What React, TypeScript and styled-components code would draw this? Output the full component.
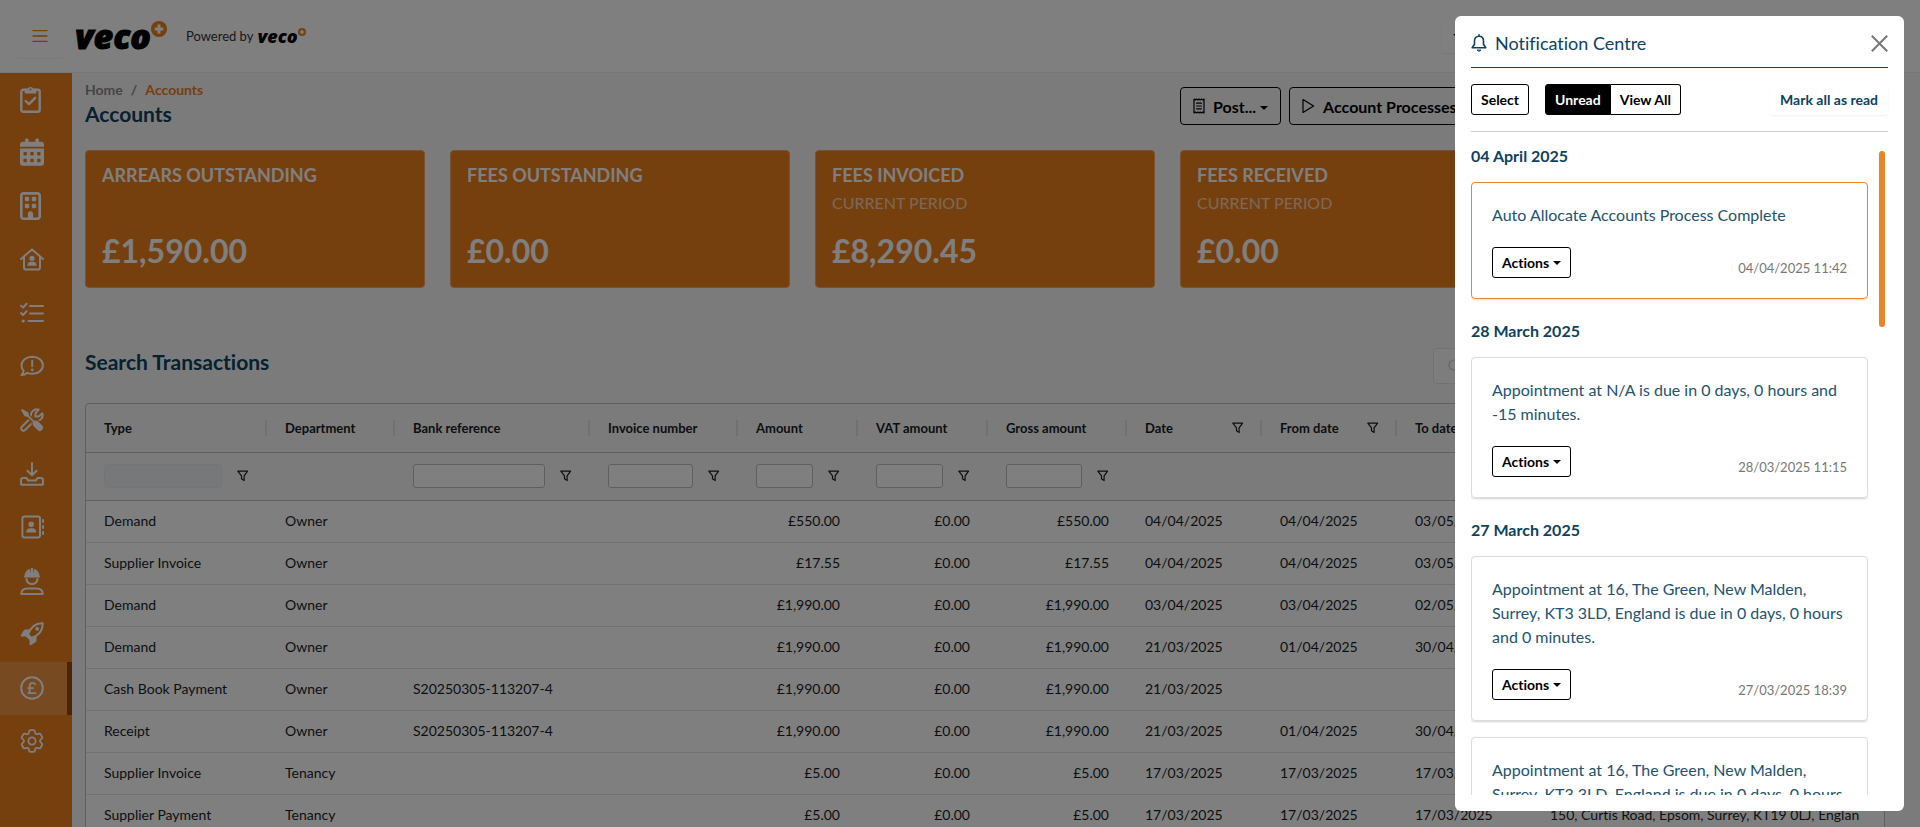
import React from 'react';
import styled, { createGlobalStyle, css } from 'styled-components';
import { FaRegBuilding, FaCalendarDays } from 'react-icons/fa6';
import { HiOutlineCog6Tooth } from 'react-icons/hi2';

const orange = '#ec7e1c';
const navy = '#0d4261';
const line = '#babfc7';
const softLine = '#dde2eb';

const GlobalStyle = createGlobalStyle`
  *, *::before, *::after { box-sizing: border-box; }
  body { margin: 0; font-family: Lato, "Open Sans", sans-serif; font-size: 14px; font-variant-ligatures: none; color: #181d1f; background: #f7f7f7; }
  button, input { font: inherit; font-variant-ligatures: none; color: inherit; }
  button { cursor: pointer; }
  h1, h2, h3, p, ul, ol { margin: 0; padding: 0; }
  ul, ol { list-style: none; }
  a { color: inherit; text-decoration: none; }
`;

/* ---------- page shell ---------- */

const Shell = styled.div`
  display: flex;
  flex-direction: column;
  height: 100vh;
  overflow: hidden;
`;

const TopBar = styled.header`
  display: flex;
  align-items: center;
  flex: none;
  height: 73px;
  padding: 0 16px;
  background: #fff;
  border-bottom: 1px solid #ececec;
`;

const MenuButton = styled.button`
  display: grid;
  place-items: center;
  width: 48px;
  height: 44px;
  padding: 0;
  border: 0;
  border-radius: 4px;
  background: none;
  color: ${orange};
  box-shadow: 0 1px 1px rgba(0, 0, 0, 0.06);
`;

const Logo = styled.span<{ $small?: boolean }>`
  display: inline-flex;
  align-items: flex-start;
  color: #000;
  font-family: 'Open Sans', sans-serif;
  font-style: italic;
  font-weight: 800;
  font-size: ${(p) => (p.$small ? 18 : 34)}px;
  line-height: ${(p) => (p.$small ? 24 : 44)}px;
  -webkit-text-stroke: ${(p) => (p.$small ? 0 : 1)}px #000;
  svg {
    flex: none;
    width: ${(p) => (p.$small ? 8 : 16)}px;
    height: ${(p) => (p.$small ? 8 : 16)}px;
    margin-top: ${(p) => (p.$small ? 4 : 7)}px;
  }
`;

const HomeLink = styled.a`
  display: flex;
  margin-left: 11px;
`;

const PoweredBy = styled.p`
  display: flex;
  align-items: center;
  gap: 4px;
  margin-left: 19px;
  font-size: 13px;
  line-height: 24px;
  color: #333;
`;

const TopTools = styled.div`
  width: 463px;
  margin-left: auto;
`;

const AccountButton = styled.button`
  display: flex;
  align-items: center;
  width: 96px;
  height: 34px;
  padding: 0 8px;
  border: 0;
  border-radius: 4px;
  background: none;
  box-shadow: 0 1px 2px rgba(0, 0, 0, 0.08);
`;

const Body = styled.div`
  display: flex;
  flex: 1;
  min-height: 0;
`;

const SideBar = styled.nav`
  flex: none;
  width: 72px;
  background: ${orange};
`;

const SideList = styled.ul`
  display: grid;
  grid-template-rows: repeat(13, 1fr);
  height: 696px;
`;

const SideLink = styled.a<{ $active?: boolean }>`
  display: flex;
  align-items: center;
  height: 100%;
  padding: 0 20px 2px;
  color: #fff;
  ${(p) =>
    p.$active &&
    css`
      background: rgba(255, 255, 255, 0.18);
      border-right: 5px solid #96490b;
    `}
  svg {
    display: block;
    width: 24px;
    height: 24px;
  }
  svg.tall {
    height: 28px;
  }
  svg.narrow {
    width: 21px;
    height: 28px;
  }
`;

const Main = styled.main`
  flex: 1;
  min-width: 0;
  padding: 7px 35px 0 13px;
`;

const columns = css`
  display: grid;
  grid-template-columns: repeat(5, minmax(0, 1fr));
  column-gap: 25px;
`;

const PageHead = styled.div`
  ${columns}
  min-height: 48px;
  margin-bottom: 22px;
`;

const PageTitle = styled.div`
  grid-column: span 3;
`;

const Crumbs = styled.ol`
  display: flex;
  gap: 8px;
  font-size: 14px;
  font-weight: 700;
  line-height: 20px;
  color: #8b8b8b;
  li {
    display: flex;
    gap: 8px;
  }
  [aria-current] {
    color: ${orange};
  }
`;

const Heading = styled.h1`
  font-size: 21px;
  font-weight: 700;
  line-height: 28px;
  color: ${navy};
`;

const PageActions = styled.div`
  display: flex;
  align-items: flex-start;
  gap: 8px;
  grid-column: span 2;
  padding-top: 7px;
`;

const OutlineButton = styled.button`
  display: flex;
  align-items: center;
  gap: 8px;
  height: 38px;
  padding: 0 12px;
  border: 1px solid #000;
  border-radius: 4px;
  background: none;
  color: #000;
  font-size: 16px;
  font-weight: 700;
  white-space: nowrap;
`;

const Caret = styled.span`
  display: inline-block;
  margin-left: 4px;
  vertical-align: 3px;
  border: 4px solid transparent;
  border-top-color: currentColor;
  border-bottom: 0;
`;

const Cards = styled.section`
  ${columns}
`;

const StatCard = styled.article`
  display: flex;
  flex-direction: column;
  height: 138px;
  padding: 12px 16px 16px;
  border: 1px solid #f0a566;
  border-radius: 4px;
  background: ${orange};
  color: #fff;
`;

const StatName = styled.h2`
  font-size: 18px;
  font-weight: 700;
  line-height: 24px;
`;

const StatPeriod = styled.p`
  padding-top: 4px;
  font-size: 16px;
  line-height: 24px;
  opacity: 0.65;
`;

const StatValue = styled.p`
  margin-top: auto;
  font-size: 32px;
  font-weight: 700;
  line-height: 40px;
`;

const SearchHead = styled.div`
  display: flex;
  justify-content: space-between;
  align-items: flex-start;
  margin: 60px 0 19px;
`;

const SearchBox = styled.label`
  display: flex;
  align-items: center;
  gap: 8px;
  width: 452px;
  height: 36px;
  padding: 0 14px;
  border: 1px solid #e2e2e2;
  border-radius: 4px;
  background: #fbfbfb;
  color: #ccc;
  input {
    flex: 1;
    min-width: 0;
    border: 0;
    background: none;
  }
`;

/* ---------- transactions table ---------- */

const TableFrame = styled.div`
  border: 1px solid ${line};
  border-radius: 4px;
  overflow: hidden;
`;

const Table = styled.table`
  width: 100%;
  table-layout: fixed;
  border-collapse: collapse;
  font-size: 14px;
  line-height: 20px;
`;

const HeadCell = styled.th`
  position: relative;
  height: 48px;
  padding: 0 18px;
  border-bottom: 1px solid ${line};
  font-size: 13px;
  font-weight: 700;
  text-align: left;
  white-space: nowrap;
  &:not(:last-child)::after {
    content: '';
    position: absolute;
    right: 0;
    top: 16px;
    width: 2px;
    height: 16px;
    background: ${softLine};
  }
`;

const HeadLabel = styled.div`
  display: flex;
  align-items: center;
  justify-content: space-between;
`;

const FilterCell = styled.td`
  height: 48px;
  padding: 0 18px;
  border-bottom: 1px solid ${line};
`;

const FilterField = styled.div`
  display: flex;
  align-items: center;
  gap: 15px;
  input {
    flex: 1;
    min-width: 0;
    height: 24px;
    border: 1px solid ${line};
    border-radius: 3px;
    background: #fff;
  }
  input:disabled {
    border-color: #e9ebee;
    background: #eff0f2;
  }
`;

const IconButton = styled.button`
  display: block;
  padding: 0;
  border: 0;
  background: none;
  svg {
    display: block;
  }
`;

const Cell = styled.td<{ $right?: boolean }>`
  height: 42px;
  padding: 0 18px;
  border-bottom: 1px solid ${softLine};
  background: #fff;
  text-align: ${(p) => (p.$right ? 'right' : 'left')};
  white-space: nowrap;
  overflow: hidden;
`;

/* ---------- notification panel ---------- */

const Backdrop = styled.div`
  position: fixed;
  inset: 0;
  background: rgba(0, 0, 0, 0.5);
`;

const Panel = styled.aside`
  position: fixed;
  top: 16px;
  right: 16px;
  bottom: 16px;
  display: flex;
  flex-direction: column;
  width: 449px;
  padding: 0 16px 16px;
  border-radius: 6px;
  background: #fff;
  color: ${navy};
`;

const PanelHead = styled.div`
  display: flex;
  align-items: center;
  gap: 8px;
  padding: 15px 0 12px;
  border-bottom: 1px solid ${navy};
`;

const PanelTitle = styled.h2`
  flex: 1;
  font-size: 18px;
  font-weight: 400;
  line-height: 24px;
`;

const PanelBar = styled.div`
  display: flex;
  align-items: center;
  gap: 16px;
  padding: 16px 0;
  border-bottom: 1px solid #ccc;
`;

const SmallButton = styled.button<{ $on?: boolean; $plain?: boolean }>`
  height: 31px;
  padding: 0 9px;
  border: 1px solid #000;
  border-radius: 3px;
  background: ${(p) => (p.$on ? '#000' : '#fff')};
  color: ${(p) => (p.$on ? '#fff' : '#000')};
  font-size: 14px;
  font-weight: 700;
  line-height: 20px;
  white-space: nowrap;
  ${(p) =>
    p.$plain &&
    css`
      margin-left: auto;
      border-color: transparent;
      color: ${navy};
      box-shadow: 0 1px 2px rgba(0, 0, 0, 0.06);
    `}
`;

const Segments = styled.div`
  display: flex;
  ${SmallButton}:first-child {
    border-radius: 3px 0 0 3px;
  }
  ${SmallButton}:last-child {
    border-left: 0;
    border-radius: 0 3px 3px 0;
  }
`;

const Feed = styled.div`
  display: flex;
  flex: 1;
  min-height: 0;
`;

const FeedList = styled.div`
  flex: 1;
  min-width: 0;
  padding-top: 8px;
  overflow-y: auto;
  scrollbar-width: none;
`;

const ScrollTrack = styled.div`
  width: 20px;
  padding: 19px 3px 0 11px;
`;

const ScrollThumb = styled.div`
  width: 6px;
  height: 176px;
  border-radius: 3px;
  background: #e6852d;
`;

const DayHeading = styled.h3`
  margin-bottom: 10px;
  font-size: 16px;
  font-weight: 700;
  line-height: 32px;
`;

const Note = styled.article<{ $current?: boolean }>`
  margin-bottom: 16px;
  padding: 20px;
  border: 1px solid ${(p) => (p.$current ? '#e6852d' : '#dcdcdc')};
  border-radius: 4px;
  box-shadow: 0 1px 2px ${(p) => (p.$current ? 'rgba(236, 126, 28, 0.25)' : 'rgba(0, 0, 0, 0.18)')};
  font-size: 16px;
  line-height: 24px;
  p {
    color: #23536f;
  }
`;

const NoteFoot = styled.div`
  display: flex;
  align-items: flex-end;
  justify-content: space-between;
  margin-top: 20px;
  time {
    font-size: 13px;
    line-height: 20px;
    color: #777;
  }
`;

/* ---------- drawings ---------- */

const stroke = {
  fill: 'none',
  stroke: 'currentColor',
  strokeWidth: 2,
  strokeLinecap: 'round' as const,
  strokeLinejoin: 'round' as const,
};

const MenuIcon = () => (
  <svg width="16" height="14" viewBox="0 0 16 14" {...stroke} strokeWidth={1.3}>
    <path d="M1 1.6h14M1 7h14M1 12.4h14" />
  </svg>
);

const PlusBadge = () => (
  <svg viewBox="0 0 16 16" aria-hidden="true">
    <circle cx="8" cy="8" r="8" fill={orange} />
    <path d="M8 3.6v8.8M3.6 8h8.8" stroke="#fff" strokeWidth="3" />
  </svg>
);

const FilterIcon = () => (
  <svg width="12" height="12" viewBox="0 0 12 12" fill="none" stroke="currentColor" strokeWidth="1.2" strokeLinejoin="round">
    <path d="M.8 1.100h9.800L7.100 5.800v4.800L4.500 8.800v-3z" />
  </svg>
);

const ReceiptIcon = () => (
  <svg width="12" height="16" viewBox="0 0 12 16" {...stroke} strokeWidth={1.2}>
    <path d="M1 1l1.300 1 1.200-1 1.300 1L6 1l1.200 1 1.300-1 1.200 1L11 1v14l-1.300-1-1.200 1-1.300-1L6 15l-1.200-1-1.300 1-1.200-1L1 15z" />
    <path d="M3.600 5.200h4.800M3.600 8h4.800M3.600 10.800h4.800" />
  </svg>
);

const PlayIcon = () => (
  <svg width="13" height="16" viewBox="0 0 13 16" {...stroke} strokeWidth={1.2}>
    <path d="M1 1.600v12.800L11.600 8z" />
  </svg>
);

const BellIcon = () => (
  <svg width="16" height="18" viewBox="0 0 16 18" {...stroke} strokeWidth={1.600}>
    <path d="M8 2.200c-2.800 0-4.500 2-4.500 4.700v3.300L1.200 13.800h13.600l-2.300-3.600V6.900C12.500 4.200 10.800 2.200 8 2.200zM8 .9v1.200" />
    <path d="M6.300 16.400c.8 1 2.600 1 3.400 0z" fill="currentColor" strokeWidth={1} />
  </svg>
);

const SearchIcon = () => (
  <svg width="14" height="14" viewBox="0 0 14 14" {...stroke} strokeWidth={1.2}>
    <circle cx="6" cy="6" r="5" />
    <path d="M10 10l3 3" />
  </svg>
);

const CloseIcon = () => (
  <svg width="17" height="17" viewBox="0 0 17 17" fill="none" stroke="#777" strokeWidth="2">
    <path d="M.8.8l15.4 15.4M16.2.8L.8 16.2" />
  </svg>
);

const ClipboardIcon = () => (
  <svg className="narrow" viewBox="0 0 21 28" {...stroke} strokeWidth={2.4}>
    <rect x="1.3" y="4.7" width="18.4" height="22" rx="2" />
    <path d="M5.6 16l3.4 3.2 6.2-6.4" />
    <path d="M5.4 4.4h2.8a2.4 2.4 0 0 1 4.6 0h2.8v3.4H5.4z" fill="currentColor" strokeWidth={1.4} />
    <circle cx="10.5" cy="4.5" r="1" fill={orange} stroke="none" />
  </svg>
);

const HouseUserIcon = () => (
  <svg viewBox="0 0 24 24" {...stroke}>
    <path d="M1 12L12 2.4 23 12M4 10v10.4a2 2 0 0 0 2 2h12a2 2 0 0 0 2-2V10" />
    <circle cx="12" cy="11.3" r="2.6" fill="currentColor" stroke="none" />
    <path d="M7.4 18.8c0-2.6 1.6-4 3.4-4h2.4c1.8 0 3.4 1.4 3.4 4z" fill="currentColor" stroke="none" />
  </svg>
);

const TasksIcon = () => (
  <svg viewBox="0 0 24 24" {...stroke}>
    <path d="M1 4.6l2 2L6.6 2.800M1 12l2 2 3.600-3.800M10 5h13M10 12.400h13M8.500 20H23" />
    <circle cx="3.200" cy="20" r="1.600" fill="currentColor" stroke="none" />
  </svg>
);

const MessageIcon = () => (
  <svg viewBox="0 0 24 24" {...stroke}>
    <path d="M12.400 2.800c6 0 10.500 3.700 10.500 8.500s-4.500 8.500-10.500 8.500c-1.900 0-3.500-.3-5-1-1.600 1.500-3.700 2.300-6 2.300 1.200-1.200 2-2.500 2.200-4.200C2.200 15.300 1.500 13.400 1.500 11.300c0-4.800 4.600-8.500 10.900-8.500z" />
    <path d="M12.200 6.800v5.400" />
    <circle cx="12.200" cy="15.800" r="1.400" fill="currentColor" stroke="none" />
  </svg>
);

const ToolsIcon = () => (
  <svg viewBox="0 0 24 24" {...stroke}>
    <path d="M15.600 5.200l-.2 3.200 3.200.2 3.700-3.300a5.800 5.800 0 0 1-7.600 7.300l-9.600 9.400a2.300 2.300 0 0 1-3.300-3.300l9.600-9.400a5.800 5.800 0 0 1 7.300-7.600z" />
    <path d="M2.800 1.800L8 5l1 3.400 5 5c1.500-.8 3-.4 4 .6l4.200 4.200c1.800 2-1.800 5.600-3.800 3.800L14.200 17.800c-1-1-1.400-2.500-.6-4L8.500 8.900 5.100 7.900 1.900 2.800z" fill="currentColor" stroke={orange} strokeWidth={3.400} />
    <path d="M2.400 1.800L7.600 4.900l.9 3.300 5.400 5.400c1.500-.8 3-.4 4 .6l4 4c1.800 2-1.600 5.400-3.600 3.600l-4-4c-1-1-1.400-2.500-.6-4L8.300 8.400 5 7.500 1.900 2.300z" fill="currentColor" strokeWidth={1.400} />
  </svg>
);

const DownloadIcon = () => (
  <svg viewBox="0 0 24 24" {...stroke}>
    <path d="M12 1v12M7.400 8.800L12 13.200l4.600-4.400" />
    <path d="M6.500 16H3a2 2 0 0 0-2 2v3.200a1.600 1.600 0 0 0 1.600 1.600h18.800a1.600 1.600 0 0 0 1.600-1.600V18a2 2 0 0 0-2-2h-3.500l-1.500 2.400H8z" />
  </svg>
);

const ContactsIcon = () => (
  <svg viewBox="0 0 24 24" {...stroke}>
    <rect x="2.400" y="1.400" width="17.600" height="21.200" rx="2" />
    <circle cx="11.200" cy="9.200" r="2.800" fill="currentColor" stroke="none" />
    <path d="M6.200 17.400c0-2.800 1.700-4.200 3.600-4.200h2.800c1.900 0 3.600 1.400 3.600 4.200z" fill="currentColor" stroke="none" />
    <path d="M23 5v2M23 11v2M23 17v2" />
  </svg>
);

const WorkerIcon = () => (
  <svg className="tall" viewBox="0 0 24 28" {...stroke}>
    <path d="M4.400 10.500c-.6 0-.6-1.300 0-1.500C5 5.200 7 2.700 9.600 1.800L10.400 6l.5-5h2.200l.5 5 .8-4.200c2.600.9 4.600 3.400 5.200 7.200.6.200.6 1.500 0 1.500z" fill="currentColor" stroke="none" />
    <path d="M6.400 12c.6 3.200 2.800 5 5.600 5s5-1.800 5.600-5" />
    <path d="M1.200 27c0-3.600 2.600-5.600 6-5.600h9.600c3.400 0 6 2 6 5.600z" />
  </svg>
);

const RocketIcon = () => (
  <svg viewBox="0 0 24 24" {...stroke}>
    <path d="M8 12.500C10.500 5.500 14.800 1 22.700 1.300 23 9.200 18.500 13.500 11.500 16z" />
    <path d="M9.600 8H5.200c-.6 0-1 .2-1.300.7L1 14h5.600zM16 14.400v4.400c0 .6-.2 1-.7 1.300L10 23v-5.600z" fill="currentColor" strokeWidth={1} />
    <path d="M8 13l3.200 3.200-1.600 1.400-3.400-3.200z" fill="currentColor" strokeWidth={1} />
    <circle cx="17.200" cy="6.800" r="1.900" fill="currentColor" stroke="none" />
  </svg>
);

const PoundIcon = () => (
  <svg viewBox="0 0 24 24" {...stroke}>
    <circle cx="12" cy="12" r="10.800" />
    <path d="M15.200 8.200c-.8-1-1.700-1.400-2.700-1.400-1.700 0-2.700 1.200-2.700 2.800v4.200c0 1.400-.5 2.600-1.300 3.400h7M8.200 12.200h5" strokeWidth={1.800} />
  </svg>
);

/* ---------- data ---------- */

const menu: { label: string; icon: React.ReactNode; active?: boolean }[] = [
  { label: 'Dashboard', icon: <ClipboardIcon /> },
  { label: 'Diary', icon: <FaCalendarDays className="tall" /> },
  { label: 'Properties', icon: <FaRegBuilding className="narrow" /> },
  { label: 'Landlords', icon: <HouseUserIcon /> },
  { label: 'Tasks', icon: <TasksIcon /> },
  { label: 'Messages', icon: <MessageIcon /> },
  { label: 'Maintenance', icon: <ToolsIcon /> },
  { label: 'Downloads', icon: <DownloadIcon /> },
  { label: 'Contacts', icon: <ContactsIcon /> },
  { label: 'Contractors', icon: <WorkerIcon /> },
  { label: 'Marketing', icon: <RocketIcon /> },
  { label: 'Accounts', icon: <PoundIcon />, active: true },
  { label: 'Settings', icon: <HiOutlineCog6Tooth viewBox="2 2 20 20" /> },
];

const stats = [
  { name: 'ARREARS OUTSTANDING', value: '£1,590.00' },
  { name: 'FEES OUTSTANDING', value: '£0.00' },
  { name: 'FEES INVOICED', period: 'CURRENT PERIOD', value: '£8,290.45' },
  { name: 'FEES RECEIVED', period: 'CURRENT PERIOD', value: '£0.00' },
];

type Column = { label: string; width?: number; right?: boolean; filter?: 'text' | 'off'; headFilter?: boolean };

const cols: Column[] = [
  { label: 'Type', width: 181, filter: 'off' },
  { label: 'Department', width: 128 },
  { label: 'Bank reference', width: 195, filter: 'text' },
  { label: 'Invoice number', width: 148, filter: 'text' },
  { label: 'Amount', width: 120, right: true, filter: 'text' },
  { label: 'VAT amount', width: 130, right: true, filter: 'text' },
  { label: 'Gross amount', width: 139, right: true, filter: 'text' },
  { label: 'Date', width: 135, headFilter: true },
  { label: 'From date', width: 135, headFilter: true },
  { label: 'To date', width: 135, headFilter: true },
  { label: '' },
];

const rows: string[][] = [
  ['Demand', 'Owner', '', '', '£550.00', '£0.00', '£550.00', '04/04/2025', '04/04/2025', '03/05/2025', ''],
  ['Supplier Invoice', 'Owner', '', '', '£17.55', '£0.00', '£17.55', '04/04/2025', '04/04/2025', '03/05/2025', ''],
  ['Demand', 'Owner', '', '', '£1,990.00', '£0.00', '£1,990.00', '03/04/2025', '03/04/2025', '02/05/2025', ''],
  ['Demand', 'Owner', '', '', '£1,990.00', '£0.00', '£1,990.00', '21/03/2025', '01/04/2025', '30/04/2025', ''],
  ['Cash Book Payment', 'Owner', 'S20250305-113207-4', '', '£1,990.00', '£0.00', '£1,990.00', '21/03/2025', '', '', ''],
  ['Receipt', 'Owner', 'S20250305-113207-4', '', '£1,990.00', '£0.00', '£1,990.00', '21/03/2025', '01/04/2025', '30/04/2025', ''],
  ['Supplier Invoice', 'Tenancy', '', '', '£5.00', '£0.00', '£5.00', '17/03/2025', '17/03/2025', '17/03/2025', ''],
  ['Supplier Payment', 'Tenancy', '', '', '£5.00', '£0.00', '£5.00', '17/03/2025', '17/03/2025', '17/03/2025', '150, Curtis Road, Epsom, Surrey, KT19 0LJ, Englan'],
];

const days = [
  { date: '04 April 2025', notes: [{ text: 'Auto Allocate Accounts Process Complete', time: '04/04/2025 11:42', current: true }] },
  { date: '28 March 2025', notes: [{ text: 'Appointment at N/A is due in 0 days, 0 hours and -15 minutes.', time: '28/03/2025 11:15' }] },
  {
    date: '27 March 2025',
    notes: [
      { text: 'Appointment at 16, The Green, New Malden, Surrey, KT3 3LD, England is due in 0 days, 0 hours and 0 minutes.', time: '27/03/2025 18:39' },
      { text: 'Appointment at 16, The Green, New Malden, Surrey, KT3 3LD, England is due in 0 days, 0 hours' },
    ],
  },
] as { date: string; notes: { text: string; time?: string; current?: boolean }[] }[];

const CloseButton = styled(IconButton)`
  height: 24px;
`;

const Veco = ({ small }: { small?: boolean }) => (
  <Logo $small={small}>
    veco
    <PlusBadge />
  </Logo>
);

export default function App() {
  return (
    <>
      <GlobalStyle />
      <Shell>
        <TopBar>
          <MenuButton aria-label="Toggle menu">
            <MenuIcon />
          </MenuButton>
          <HomeLink href="#home">
            <Veco />
          </HomeLink>
          <PoweredBy>
            Powered by <Veco small />
          </PoweredBy>
          <TopTools>
            <AccountButton aria-label="Account menu">
              <Caret />
            </AccountButton>
          </TopTools>
        </TopBar>
        <Body>
          <SideBar aria-label="Main">
            <SideList>
              {menu.map((m) => (
                <li key={m.label}>
                  <SideLink href={`#${m.label.toLowerCase()}`} aria-label={m.label} $active={m.active}>
                    {m.icon}
                  </SideLink>
                </li>
              ))}
            </SideList>
          </SideBar>
          <Main>
            <PageHead>
              <PageTitle>
                <Crumbs>
                  <li>
                    <a href="#home">Home</a>
                    <span>/</span>
                  </li>
                  <li aria-current="page">Accounts</li>
                </Crumbs>
                <Heading>Accounts</Heading>
              </PageTitle>
              <PageActions>
                <OutlineButton>
                  <ReceiptIcon />
                  <span>
                    Post...
                    <Caret />
                  </span>
                </OutlineButton>
                <OutlineButton>
                  <PlayIcon />
                  <span>
                    Account Processes
                    <Caret />
                  </span>
                </OutlineButton>
              </PageActions>
            </PageHead>
            <Cards>
              {stats.map((s) => (
                <StatCard key={s.name}>
                  <StatName>{s.name}</StatName>
                  {s.period && <StatPeriod>{s.period}</StatPeriod>}
                  <StatValue>{s.value}</StatValue>
                </StatCard>
              ))}
            </Cards>
            <SearchHead>
              <Heading as="h2">Search Transactions</Heading>
              <SearchBox>
                <SearchIcon />
                <input type="search" aria-label="Search transactions" disabled />
              </SearchBox>
            </SearchHead>
            <TableFrame>
              <Table>
                <colgroup>
                  {cols.map((c, i) => (
                    <col key={i} width={c.width} />
                  ))}
                </colgroup>
                <thead>
                  <tr>
                    {cols.map((c, i) => (
                      <HeadCell key={i} scope="col">
                        <HeadLabel>
                          {c.label}
                          {c.headFilter && (
                            <IconButton aria-label={`Filter ${c.label}`}>
                              <FilterIcon />
                            </IconButton>
                          )}
                        </HeadLabel>
                      </HeadCell>
                    ))}
                  </tr>
                  <tr>
                    {cols.map((c, i) => (
                      <FilterCell key={i}>
                        {c.filter && (
                          <FilterField>
                            <input type="text" aria-label={`${c.label} filter`} disabled={c.filter === 'off'} />
                            <IconButton aria-label={`${c.label} filter options`}>
                              <FilterIcon />
                            </IconButton>
                          </FilterField>
                        )}
                      </FilterCell>
                    ))}
                  </tr>
                </thead>
                <tbody>
                  {rows.map((r, i) => (
                    <tr key={i}>
                      {r.map((v, j) => (
                        <Cell key={j} $right={cols[j].right}>
                          {v}
                        </Cell>
                      ))}
                    </tr>
                  ))}
                </tbody>
              </Table>
            </TableFrame>
          </Main>
        </Body>
      </Shell>
      <Backdrop />
      <Panel role="dialog" aria-label="Notification Centre">
        <PanelHead>
          <BellIcon />
          <PanelTitle>Notification Centre</PanelTitle>
          <CloseButton aria-label="Close">
            <CloseIcon />
          </CloseButton>
        </PanelHead>
        <PanelBar>
          <SmallButton>Select</SmallButton>
          <Segments>
            <SmallButton $on>Unread</SmallButton>
            <SmallButton>View All</SmallButton>
          </Segments>
          <SmallButton $plain>Mark all as read</SmallButton>
        </PanelBar>
        <Feed>
          <FeedList>
            {days.map((d) => (
              <section key={d.date}>
                <DayHeading>{d.date}</DayHeading>
                {d.notes.map((n, i) => (
                  <Note key={i} $current={n.current}>
                    <p>{n.text}</p>
                    {n.time && (
                      <NoteFoot>
                        <SmallButton>
                          Actions
                          <Caret />
                        </SmallButton>
                        <time>{n.time}</time>
                      </NoteFoot>
                    )}
                  </Note>
                ))}
              </section>
            ))}
          </FeedList>
          <ScrollTrack>
            <ScrollThumb />
          </ScrollTrack>
        </Feed>
      </Panel>
    </>
  );
}
